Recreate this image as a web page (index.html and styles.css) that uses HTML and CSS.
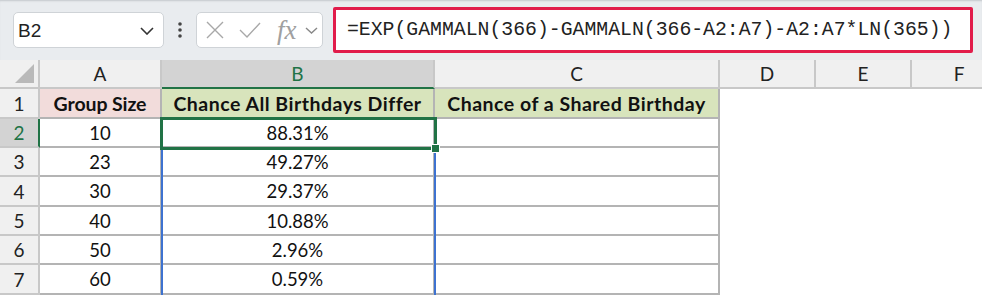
FILE: index.html
```html
<!DOCTYPE html>
<html lang="en">
<head>
    <meta charset="UTF-8">
    <title>Birthday Paradox</title>
    <link rel="stylesheet" href="styles.css">
</head>
<body>
    <div class="toolbar">
        <div class="name-box">
            <span>B2</span>
            <svg width="14" height="8" viewBox="0 0 14 8"><path d="M1 1 L7 7 L13 1" fill="none" stroke="#333" stroke-width="1.6"/></svg>
        </div>
        <svg class="dots" width="8" height="20" viewBox="0 0 8 20">
            <circle cx="4" cy="4" r="1.8" fill="#444"/>
            <circle cx="4" cy="10" r="1.8" fill="#444"/>
            <circle cx="4" cy="16" r="1.8" fill="#444"/>
        </svg>
        <div class="fx-box">
            <svg width="18" height="18" viewBox="0 0 18 18"><path d="M1 1 L17 17 M17 1 L1 17" stroke="#a8a8a8" stroke-width="1.4"/></svg>
            <svg width="22" height="16" viewBox="0 0 22 16"><path d="M1 8 L8 15 L21 1" fill="none" stroke="#a8a8a8" stroke-width="1.4"/></svg>
            <span class="fx">fx</span>
            <svg width="13" height="7" viewBox="0 0 13 7"><path d="M1 1 L6.5 6 L12 1" fill="none" stroke="#888" stroke-width="1.4"/></svg>
        </div>
        <div class="formula">=EXP(GAMMALN(366)-GAMMALN(366-A2:A7)-A2:A7*LN(365))</div>
    </div>

    <div class="sheet">
        <div class="corner"><span class="tri"></span></div>
        <div class="col-head">A</div>
        <div class="col-head active">B</div>
        <div class="col-head">C</div>
        <div class="col-head">D</div>
        <div class="col-head">E</div>
        <div class="col-head">F</div>

        <div class="row-head">1</div>
        <div class="cell bold pink">Group Size</div>
        <div class="cell bold green">Chance All Birthdays Differ</div>
        <div class="cell bold green">Chance of a Shared Birthday</div>
        <div class="blank"></div><div class="blank"></div><div class="blank"></div>

        <div class="row-head active">2</div>
        <div class="cell">10</div>
        <div class="cell">88.31%</div>
        <div class="cell"></div>
        <div class="blank"></div><div class="blank"></div><div class="blank"></div>

        <div class="row-head">3</div>
        <div class="cell">23</div>
        <div class="cell">49.27%</div>
        <div class="cell"></div>
        <div class="blank"></div><div class="blank"></div><div class="blank"></div>

        <div class="row-head">4</div>
        <div class="cell">30</div>
        <div class="cell">29.37%</div>
        <div class="cell"></div>
        <div class="blank"></div><div class="blank"></div><div class="blank"></div>

        <div class="row-head">5</div>
        <div class="cell">40</div>
        <div class="cell">10.88%</div>
        <div class="cell"></div>
        <div class="blank"></div><div class="blank"></div><div class="blank"></div>

        <div class="row-head">6</div>
        <div class="cell">50</div>
        <div class="cell">2.96%</div>
        <div class="cell"></div>
        <div class="blank"></div><div class="blank"></div><div class="blank"></div>

        <div class="row-head">7</div>
        <div class="cell">60</div>
        <div class="cell">0.59%</div>
        <div class="cell"></div>
        <div class="blank"></div><div class="blank"></div><div class="blank"></div>

        <!-- spill range and active cell outlines -->
        <div class="spill"></div>
        <div class="active-cell"><span class="handle"></span></div>
    </div>
</body>
</html>
```

FILE: styles.css
```css
body {
    margin: 0;
    background-color: #fff;
    font-family: 'Lato', 'Liberation Sans', sans-serif;
    color: #111;
    overflow: hidden;
}
.toolbar {
    height: 60px;
    display: flex;
    align-items: center;
    padding-left: 13px;
    background-color: #e9ecef;
    box-shadow: inset 0 2px 2px -1px #c4c8cc;
    box-sizing: border-box;
}
.name-box {
    width: 151px;
    height: 36px;
    box-sizing: border-box;
    display: flex;
    align-items: center;
    justify-content: space-between;
    padding: 2px 9px 0 4px;
    background-color: #fff;
    border: 1px solid #cfd3d7;
    border-radius: 5px;
    font-family: 'Liberation Sans', sans-serif;
    font-size: 19px;
    color: #222;
}
.dots {
    margin: 0 12px;
}
.fx-box {
    width: 127px;
    height: 36px;
    box-sizing: border-box;
    display: flex;
    align-items: center;
    padding: 0 4px 0 9px;
    background-color: #fff;
    border: 1px solid #cfd3d7;
    border-radius: 5px;
}
.fx-box svg:nth-child(2) {
    margin-left: 15px;
}
.fx {
    margin-left: 16px;
    margin-right: 8px;
    font-family: 'Liberation Serif', serif;
    font-style: italic;
    font-size: 27px;
    color: #a0a0a0;
    line-height: 1;
}
.formula {
    margin-left: 10px;
    width: 640px;
    height: 46px;
    box-sizing: border-box;
    border: 3px solid #e11c4b;
    border-radius: 2px;
    background-color: #fff;
    padding: 0 0 0 11px;
    display: flex;
    align-items: center;
    font-family: 'Liberation Mono', monospace;
    font-size: 19.8px;
    color: #222;
}
.sheet {
    position: relative;
    display: grid;
    grid-template-columns: 40px 122px 273px 285px 96px 96px 96px;
    grid-template-rows: 29px 30px 29px 29px 30px 29px 29px 30px;
    font-size: 18.5px;
}
.sheet > div {
    box-sizing: border-box;
    display: flex;
    align-items: center;
    justify-content: center;
}
.corner {
    position: relative;
    background-color: #f0f0f0;
    border-right: 2px solid #c8c8c8;
    border-bottom: 2px solid #c8c8c8;
}
.tri {
    position: absolute;
    right: 4px;
    bottom: 4px;
    width: 0;
    height: 0;
    border-left: 19px solid transparent;
    border-bottom: 19px solid #b9b9b9;
}
.col-head {
    background-color: #f0f0f0;
    border-right: 2px solid #c8c8c8;
    border-bottom: 2px solid #c8c8c8;
    color: #222;
    font-size: 19px;
}
.col-head.active {
    background-color: #d3d3d3;
    border-bottom: 2px solid #217346;
    color: #217346;
}
.row-head {
    background-color: #f0f0f0;
    border-right: 2px solid #c8c8c8;
    border-bottom: 2px solid #c8c8c8;
    color: #222;
    font-size: 19px;
}
.row-head.active {
    background-color: #d3d3d3;
    border-right: 2px solid #217346;
    color: #217346;
}
.cell {
    border-right: 2px solid #b4b4b4;
    border-bottom: 2px solid #b4b4b4;
    background-color: #fff;
}
.bold {
    font-weight: bold;
}
.pink {
    background-color: #f2dcdb;
    font-size: 19.5px;
    letter-spacing: -0.1px;
}
.green {
    background-color: #d8e4bc;
    font-size: 19.5px;
    letter-spacing: 0.5px;
}
.blank {
    background-color: #fff;
}
.spill {
    position: absolute;
    left: 161px;
    top: 58px;
    width: 275px;
    height: 179px;
    border: 2px solid #3d72d0;
}
.active-cell {
    position: absolute;
    left: 160px;
    top: 57px;
    width: 277px;
    height: 33px;
    border: 3px solid #217346;
}
.handle {
    position: absolute;
    right: -6px;
    bottom: -6px;
    width: 7px;
    height: 7px;
    background-color: #217346;
    border: 1px solid #fff;
}
```
